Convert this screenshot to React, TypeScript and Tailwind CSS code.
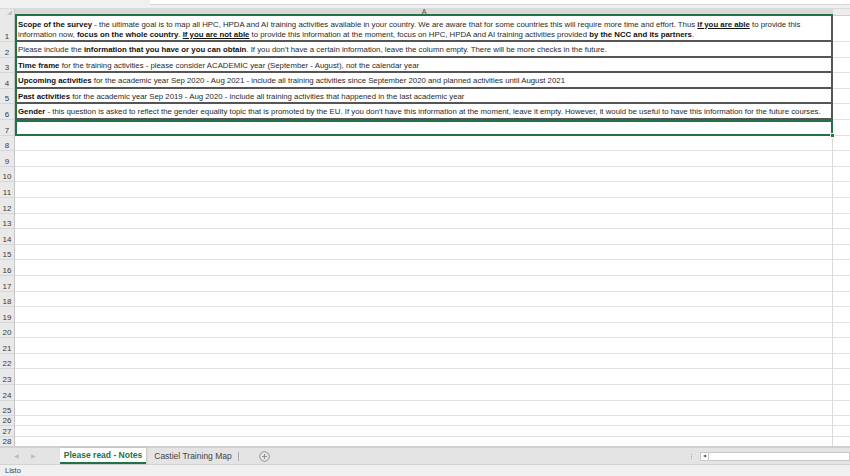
import React from 'react';

const B = ({ children }: { children: React.ReactNode }) => <span className="font-bold text-[#111]">{children}</span>;
const BU = ({ children }: { children: React.ReactNode }) => <span className="font-bold underline text-[#111]">{children}</span>;

type Row = { n: number; h: string; content?: React.ReactNode; kind: 'text' | 'active' | 'empty' };

const rows: Row[] = [
  {
    n: 1,
    h: 'h-[26px]',
    kind: 'text',
    content: (
      <>
        <B>Scope of the survey</B> - the ultimate goal is to map all HPC, HPDA and AI training activities available in your country. We are aware that for some countries this will require more time and effort. Thus <BU>if you are able</BU> to provide this
        <br />
        information now, <B>focus on the whole country</B>. <BU>If you are not able</BU> to provide this information at the moment, focus on HPC, HPDA and AI training activities provided <B>by the NCC and its partners</B>.
      </>
    ),
  },
  {
    n: 2,
    h: 'h-[15.6px]',
    kind: 'text',
    content: (
      <>
        Please include the <B>information that you have or you can obtain</B>. If you don't have a certain information, leave the column empty. There will be more checks in the future.
      </>
    ),
  },
  {
    n: 3,
    h: 'h-[15.6px]',
    kind: 'text',
    content: (
      <>
        <B>Time frame</B> for the training activities - please consider ACADEMIC year (September - August), not the calendar year
      </>
    ),
  },
  {
    n: 4,
    h: 'h-[15.6px]',
    kind: 'text',
    content: (
      <>
        <B>Upcoming activities</B> for the academic year Sep 2020 - Aug 2021 - include all training activities since September 2020 and planned activities until August 2021
      </>
    ),
  },
  {
    n: 5,
    h: 'h-[15.6px]',
    kind: 'text',
    content: (
      <>
        <B>Past activities</B> for the academic year Sep 2019 - Aug 2020 - include all training activities that happened in the last academic year
      </>
    ),
  },
  {
    n: 6,
    h: 'h-[15.6px]',
    kind: 'text',
    content: (
      <>
        <B>Gender</B> - this question is asked to reflect the gender equality topic that is promoted by the EU. If you don't have this information at the moment, leave it empty. However, it would be useful to have this information for the future courses.
      </>
    ),
  },
  { n: 7, h: 'h-[15.6px]', kind: 'active' },
  ...Array.from({ length: 17 }, (_, i) => ({ n: 8 + i, h: 'h-[15.6px]', kind: 'empty' as const })),
  { n: 25, h: 'h-[15px]', kind: 'empty' },
  { n: 26, h: 'h-[10px]', kind: 'empty' },
  { n: 27, h: 'h-[11px]', kind: 'empty' },
  { n: 28, h: 'h-[10px]', kind: 'empty' },
];

export default function App() {
  return (
    <div className="w-[850px] h-[476px] overflow-hidden bg-white flex flex-col font-['Liberation_Sans',Arial,sans-serif] text-[#222]">
      {/* top strip */}
      <div className="h-[9px] shrink-0 flex bg-[#f0f0f0] border-b border-[#dadada]">
        <div className="w-[150px]" />
        <div className="flex-1 h-[5px] bg-white border-b border-[#d6d6d6]" />
      </div>
      {/* column header */}
      <div className="h-[7px] shrink-0 flex">
        <div className="w-[15px] shrink-0 bg-[#e9e9e9] border-r border-[#c8c8c8] relative overflow-hidden">
          <svg className="absolute right-[2px] bottom-[1px]" width="5" height="5" viewBox="0 0 5 5">
            <polygon points="5,0 5,5 0,5" fill="#c4c4c4" />
          </svg>
        </div>
        <div className="w-[818px] shrink-0 bg-[#d9d9d9] border-b-2 border-[#217346] flex items-center justify-center text-[7px] leading-none text-[#444]">
          A
        </div>
        <div className="flex-1 bg-[#ececec] border-b border-[#cfcfcf]" />
      </div>
      {/* rows */}
      <div className="flex-1 overflow-hidden flex flex-col">
        {rows.map((r) => (
          <div key={r.n} className={`${r.h} shrink-0 flex`}>
            <div className="w-[15px] shrink-0 bg-[#e9e9e9] border-r border-[#c6c6c6] border-b border-b-[#d6d6d6] flex items-end justify-center text-[8px] leading-[9px] text-[#3a3a3a] overflow-hidden">
              {r.n}
            </div>
            {r.kind === 'text' && (
              <div className="w-[818px] shrink-0 border-l-2 border-l-[#217346] border-r-2 border-r-[#555] border-b-2 border-b-[#555] flex items-end pb-[0.5px] pl-[1px] text-[7.8px] leading-[10px] text-[#2a2a2a] whitespace-nowrap overflow-hidden">
                <div>{r.content}</div>
              </div>
            )}
            {r.kind === 'active' && (
              <div className="w-[818px] shrink-0 border-2 border-[#217346] relative">
                <div className="absolute right-[-4px] bottom-[-4px] w-[5px] h-[5px] bg-[#217346] border border-white" />
              </div>
            )}
            {r.kind === 'empty' && <div className="w-[818px] shrink-0 border-b border-[#e1e1e1] border-r border-r-[#dadada]" />}
            <div className="flex-1 border-b border-[#e1e1e1]" />
          </div>
        ))}
      </div>
      {/* tab bar */}
      <div className="h-[19px] shrink-0 bg-[#e4e4e4] border-t-2 border-[#d0d0d0] border-b border-b-[#d4d4d4] flex items-stretch text-[8.5px]">
        <div className="w-[60px] flex items-center gap-[12px] pl-[14px] text-[6px] text-[#bdbdbd]">
          <span>◀</span>
          <span>▶</span>
        </div>
        <div className="w-[86px] bg-white border-b-2 border-[#217346] flex items-center justify-center font-bold text-[#217346] shadow-[1px_0_2px_rgba(0,0,0,0.15)]">
          Please read - Notes
        </div>
        <div className="w-[92px] pl-[2px] flex items-center justify-center text-[#444]">Castiel Training Map</div>
        <div className="flex items-center">
          <div className="w-px h-[9px] bg-[#aaa]" />
        </div>
        <div className="w-[50px] flex items-center justify-center">
          <svg width="11" height="11" viewBox="0 0 11 11">
            <circle cx="5.5" cy="5.5" r="4.8" fill="none" stroke="#8a8a8a" strokeWidth="0.9" />
            <line x1="5.5" y1="3" x2="5.5" y2="8" stroke="#8a8a8a" strokeWidth="0.9" />
            <line x1="3" y1="5.5" x2="8" y2="5.5" stroke="#8a8a8a" strokeWidth="0.9" />
          </svg>
        </div>
        <div className="flex-1" />
        <div className="flex items-center gap-[8px]">
          <div className="flex flex-col gap-[1px]">
            <div className="w-[1px] h-[1px] bg-[#aaa]" />
            <div className="w-[1px] h-[1px] bg-[#aaa]" />
            <div className="w-[1px] h-[1px] bg-[#aaa]" />
          </div>
          <div className="flex items-center h-[9px]">
            <div className="w-[9px] h-[9px] bg-white border border-[#c8c8c8] flex items-center justify-center text-[4px] text-[#555] leading-none">
              ◀
            </div>
            <div className="w-[141px] h-[9px] bg-white border border-[#c8c8c8] border-l-0" />
          </div>
        </div>
      </div>
      {/* status bar */}
      <div className="h-[11px] shrink-0 bg-[#f0f0f0] flex items-center pl-[5px] text-[7.5px] leading-none text-[#444]">Listo</div>
    </div>
  );
}
